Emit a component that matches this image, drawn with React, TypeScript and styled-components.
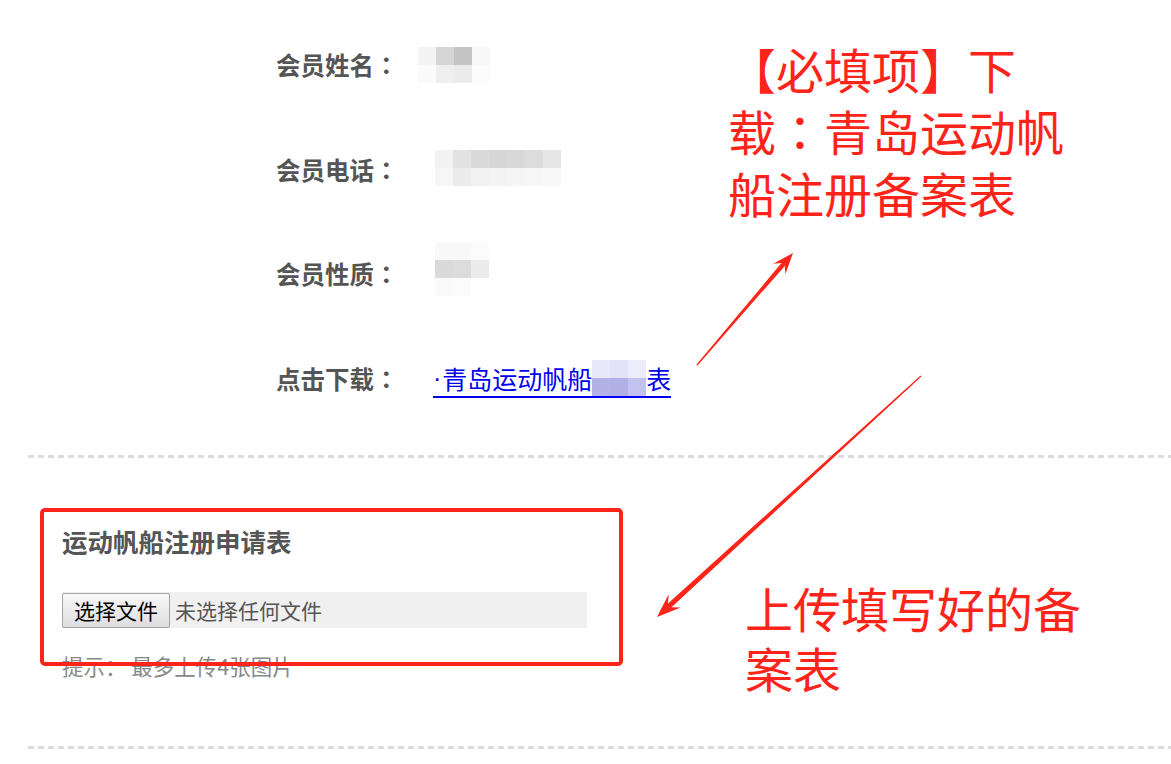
import * as React from 'react';
import styled, { createGlobalStyle } from 'styled-components';

const GlobalStyle = createGlobalStyle`
  html, body {
    margin: 0;
    padding: 0;
    background: #fff;
  }
  body {
    font-family: "Noto Sans CJK SC", "Liberation Sans", sans-serif;
  }
`;

const red = '#ff2419';

const Page = styled.div`
  position: relative;
  width: 1171px;
  height: 764px;
  overflow: hidden;
  background: #fff;
`;

const InfoList = styled.div`
  padding: 13px 0 0 276px;
`;

const Row = styled.div`
  display: flex;
  align-items: center;
  height: 104.5px;
`;

const Label = styled.div`
  width: 157px;
  flex-shrink: 0;
  font-size: 24.5px;
  font-weight: 700;
  color: #555;
  line-height: 30px;
`;

// full-width colon centred in its cell, as the reference renders it
const Colon = styled.span`
  font-family: "Noto Sans CJK TC", "Noto Sans CJK SC", sans-serif;
`;

const Dot = styled.span`
  font-family: "Liberation Sans", sans-serif;
  margin-right: 1px;
`;

const Divider = styled.div<{ $top: number }>`
  margin: ${(p) => p.$top}px 0 0 28px;
  height: 3px;
  background: repeating-linear-gradient(
    to right,
    #dcdcdc 0 6px,
    transparent 6px 10px
  );
`;

const MosaicGrid = styled.div<{ $cols: number; $cell: number; $shift: number; $lift: number }>`
  display: inline-grid;
  grid-template-columns: repeat(${(p) => p.$cols}, ${(p) => p.$cell}px);
  grid-auto-rows: ${(p) => p.$cell}px;
  margin-left: ${(p) => p.$shift}px;
  transform: translateY(${(p) => p.$lift}px);
  vertical-align: middle;
`;

const Cell = styled.span<{ $color: string }>`
  display: block;
  background: ${(p) => p.$color};
`;

const DownloadLink = styled.a`
  display: inline-flex;
  align-items: center;
  font-size: 25px;
  line-height: 28px;
  color: #0000ee;
  text-decoration: none;
  border-bottom: 2px solid #0000ee;
  cursor: pointer;
`;

const UploadSection = styled.section`
  padding: 68px 0 0 62px;
`;

const SectionTitle = styled.h3`
  margin: 0;
  font-size: 25.5px;
  line-height: 30px;
  font-weight: 700;
  color: #555;
`;

const FileField = styled.div`
  display: flex;
  align-items: center;
  margin-top: 36px;
  width: 525px;
  height: 36px;
  background: #f0f0f0;
`;

const FileButton = styled.button`
  height: 35px;
  padding: 0 11px;
  font-family: inherit;
  font-size: 21px;
  line-height: 1;
  color: #000;
  background: linear-gradient(#f8f8f8, #dddddd);
  border: 1px solid #a3a3a3;
  border-radius: 2px;
`;

const FileStatus = styled.span`
  margin-left: 5px;
  font-size: 21px;
  color: #555;
`;

const Hint = styled.p`
  margin: 26px 0 0;
  font-size: 21.5px;
  line-height: 24px;
  color: #888;
`;

const Overlay = styled.div`
  position: absolute;
  inset: 0;
  pointer-events: none;
`;

const MarkBox = styled.div`
  position: absolute;
  left: 40px;
  top: 508px;
  width: 575px;
  height: 150px;
  border: 4px solid ${red};
  border-radius: 5px;
`;

const Note = styled.div<{ $left: number; $top: number; $lh: number }>`
  position: absolute;
  left: ${(p) => p.$left}px;
  top: ${(p) => p.$top}px;
  font-size: 48px;
  line-height: ${(p) => p.$lh}px;
  color: ${red};
  white-space: nowrap;
`;

const ArrowLayer = styled.svg`
  position: absolute;
  left: 0;
  top: 0;
`;

type Pt = [number, number];

type MosaicProps = {
  rows: string[][];
  cell?: number;
  shift?: number;
  lift?: number;
};

function Mosaic({ rows, cell = 18, shift = 0, lift = 0 }: MosaicProps) {
  return (
    <MosaicGrid $cols={rows[0].length} $cell={cell} $shift={shift} $lift={lift}>
      {rows.flat().map((c, i) => (
        <Cell key={i} $color={c} />
      ))}
    </MosaicGrid>
  );
}

function arrowPoints(
  tail: Pt,
  tip: Pt,
  headLen: number,
  headHalf: number,
  tailW: number,
  neckW: number
) {
  const dx = tip[0] - tail[0];
  const dy = tip[1] - tail[1];
  const len = Math.hypot(dx, dy);
  const u: Pt = [dx / len, dy / len];
  const n: Pt = [-u[1], u[0]];
  const at = (d: number, s: number): Pt => [
    tip[0] - u[0] * d + n[0] * s,
    tip[1] - u[1] * d + n[1] * s
  ];
  const pts: Pt[] = [
    [tail[0] + n[0] * tailW, tail[1] + n[1] * tailW],
    at(headLen * 0.72, neckW),
    at(headLen, headHalf),
    tip,
    at(headLen, -headHalf),
    at(headLen * 0.72, -neckW),
    [tail[0] - n[0] * tailW, tail[1] - n[1] * tailW]
  ];
  return pts.map((p) => `${p[0].toFixed(1)},${p[1].toFixed(1)}`).join(' ');
}

const nameBlur = [
  ['#f4f4f4', '#d6d6d6', '#c5c5c5', '#f7f8fa'],
  ['#fafafa', '#efefef', '#ebebeb', '#fcfcfc']
];

const phoneBlur = [
  ['#f2f2f2', '#e2e2e2', '#dadada', '#d6d6d6', '#d8d8d8', '#dcdcdc', '#e6e6e6'],
  ['#f6f6f6', '#ececec', '#f1f1f1', '#f3f3f3', '#f5f5f5', '#f6f6f6', '#f9f9f9']
];

const typeBlur = [
  ['#f8f8f8', '#f8f8f8', '#fbfbfb'],
  ['#dadada', '#dcdcdc', '#ececec'],
  ['#fafafa', '#fbfbfb', '#ffffff']
];

const linkBlur = [
  ['#e8e8f8', '#e2e2f6', '#ececfa'],
  ['#b2b2e8', '#b0b0e6', '#c2c2ee']
];

function FieldLabel({ text }: { text: string }) {
  return (
    <Label>
      {text}
      <Colon>：</Colon>
    </Label>
  );
}

function App() {
  return (
    <Page>
      <GlobalStyle />
      <InfoList>
        <Row>
          <FieldLabel text="会员姓名" />
          <Mosaic rows={nameBlur} shift={-15} />
        </Row>
        <Row>
          <FieldLabel text="会员电话" />
          <Mosaic rows={phoneBlur} shift={2} lift={-2} />
        </Row>
        <Row>
          <FieldLabel text="会员性质" />
          <Mosaic rows={typeBlur} shift={2} lift={-5} />
        </Row>
        <Row>
          <FieldLabel text="点击下载" />
          <DownloadLink>
            <Dot>·</Dot>
            青岛运动帆船
            <Mosaic rows={linkBlur} cell={18} />
            表
          </DownloadLink>
        </Row>
      </InfoList>

      <Divider $top={24} />

      <UploadSection>
        <SectionTitle>运动帆船注册申请表</SectionTitle>
        <FileField>
          <FileButton type="button">选择文件</FileButton>
          <FileStatus>未选择任何文件</FileStatus>
        </FileField>
        <Hint>提示： 最多上传4张图片</Hint>
      </UploadSection>

      <Divider $top={68} />

      <Overlay>
        <MarkBox />
        <Note $left={728} $top={37} $lh={62}>
          【必填项】下
          <br />
          载<Colon>：</Colon>青岛运动帆
          <br />
          船注册备案表
        </Note>
        <Note $left={745} $top={577} $lh={60}>
          上传填写好的备
          <br />
          案表
        </Note>
        <ArrowLayer width={1171} height={764} viewBox="0 0 1171 764">
          <polygon
            fill={red}
            points={arrowPoints([697, 365], [793, 253], 21, 8, 0.6, 2.2)}
          />
          <polygon
            fill={red}
            points={arrowPoints([921, 376], [657, 617], 24, 9, 0.6, 2.6)}
          />
        </ArrowLayer>
      </Overlay>
    </Page>
  );
}

export default App;
